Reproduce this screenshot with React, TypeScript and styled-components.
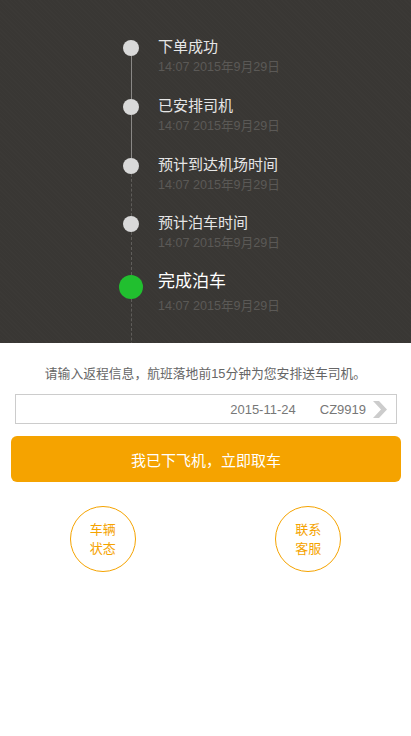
import React from "react";
import styled, { createGlobalStyle } from "styled-components";

const Global = createGlobalStyle`
  html, body { margin: 0; padding: 0; background: #ffffff; }
  body { font-family: "Liberation Sans", Arial, "Noto Sans CJK SC", sans-serif; }
  * { box-sizing: border-box; }
`;

const Page = styled.div`
  width: 411px;
  min-height: 736px;
  background: #fff;
`;

const Dark = styled.section`
  height: 343px;
  background-color: #393734;
  background-image: repeating-linear-gradient(45deg, rgba(255,255,255,0.012) 0 1px, transparent 1px 3px);
  padding: 40px 0 0 119px;
  overflow: hidden;
`;

const Item = styled.div<{ $h: number }>`
  display: flex;
  height: ${(p) => p.$h}px;
`;

const Marker = styled.div`
  width: 24px;
  display: flex;
  flex-direction: column;
  align-items: center;
  flex: none;
`;

const Dot = styled.div<{ $big?: boolean }>`
  width: ${(p) => (p.$big ? 24 : 16)}px;
  height: ${(p) => (p.$big ? 24 : 16)}px;
  border-radius: 50%;
  background: ${(p) => (p.$big ? "#21bf2f" : "#d9d9d9")};
  flex: none;
`;

const Segment = styled.div<{ $dashed?: boolean }>`
  flex: 1;
  width: 0;
  border-left: 1px ${(p) => (p.$dashed ? "dashed #5f5d5a" : "solid #8a8886")};
`;

const Texts = styled.div<{ $big?: boolean }>`
  margin-left: 15px;
  margin-top: -2px;
  display: flex;
  flex-direction: column;
  gap: ${(p) => (p.$big ? 7 : 3)}px;
`;

const Title = styled.div<{ $big?: boolean }>`
  font-size: ${(p) => (p.$big ? 17 : 15)}px;
  line-height: 18px;
  color: ${(p) => (p.$big ? "#ffffff" : "#e6e6e6")};
  white-space: nowrap;
`;

const Time = styled.div`
  font-size: 12.6px;
  line-height: 16px;
  color: #5b5956;
  white-space: nowrap;
`;

const Bottom = styled.section`
  padding: 21px 0 0;
  display: flex;
  flex-direction: column;
  align-items: center;
`;

const Info = styled.p`
  margin: 0;
  font-size: 12.8px;
  line-height: 20px;
  color: #666;
  text-align: center;
`;

const Field = styled.div`
  margin: 10px 14px 0 15px;
  align-self: stretch;
  height: 30px;
  border: 1px solid #cccccc;
  display: flex;
  align-items: center;
  justify-content: flex-end;
  padding-right: 8px;
  font-size: 13px;
  color: #777;
`;

const FieldValue = styled.span<{ $gap?: number }>`
  margin-right: ${(p) => p.$gap ?? 0}px;
`;

const PrimaryButton = styled.button`
  margin: 12px 10px 0 11px;
  align-self: stretch;
  height: 46px;
  border: none;
  border-radius: 6px;
  background: #f5a300;
  color: #fff;
  font-family: inherit;
  font-size: 15px;
  cursor: pointer;
`;

const Actions = styled.div`
  margin-top: 24px;
  align-self: stretch;
  display: flex;
  justify-content: space-around;
`;

const RoundAction = styled.button`
  width: 66px;
  height: 66px;
  border-radius: 50%;
  border: 1px solid #f5a300;
  background: #fff;
  color: #f5a300;
  font-family: inherit;
  font-size: 13px;
  line-height: 19px;
  padding: 0;
  display: flex;
  flex-direction: column;
  align-items: center;
  justify-content: center;
`;

const Chevron = () => (
  <svg width="16" height="17" viewBox="0 0 16 17" style={{ display: "block" }}>
    <polygon points="1,0 7,0 15,8.5 7,17 1,17 9,8.5" fill="#cccccc" />
  </svg>
);

const steps = [
  { title: "下单成功", h: 58.7, dashed: false },
  { title: "已安排司机", h: 59.3, dashed: false },
  { title: "预计到达机场时间", h: 58, dashed: true },
  { title: "预计泊车时间", h: 59, dashed: true },
];

export default function App() {
  return (
    <Page>
      <Global />
      <Dark>
        {steps.map((s) => (
          <Item key={s.title} $h={s.h}>
            <Marker>
              <Dot />
              <Segment $dashed={s.dashed} />
            </Marker>
            <Texts>
              <Title>{s.title}</Title>
              <Time>14:07 2015年9月29日</Time>
            </Texts>
          </Item>
        ))}
        <Item $h={80}>
          <Marker>
            <Dot $big />
            <Segment $dashed />
          </Marker>
          <Texts $big>
            <Title $big>完成泊车</Title>
            <Time>14:07 2015年9月29日</Time>
          </Texts>
        </Item>
      </Dark>
      <Bottom>
        <Info>请输入返程信息，航班落地前15分钟为您安排送车司机。</Info>
        <Field>
          <FieldValue $gap={24}>2015-11-24</FieldValue>
          <FieldValue $gap={6}>CZ9919</FieldValue>
          <Chevron />
        </Field>
        <PrimaryButton>我已下飞机，立即取车</PrimaryButton>
        <Actions>
          <RoundAction>
            <span>车辆</span>
            <span>状态</span>
          </RoundAction>
          <RoundAction>
            <span>联系</span>
            <span>客服</span>
          </RoundAction>
        </Actions>
      </Bottom>
    </Page>
  );
}
